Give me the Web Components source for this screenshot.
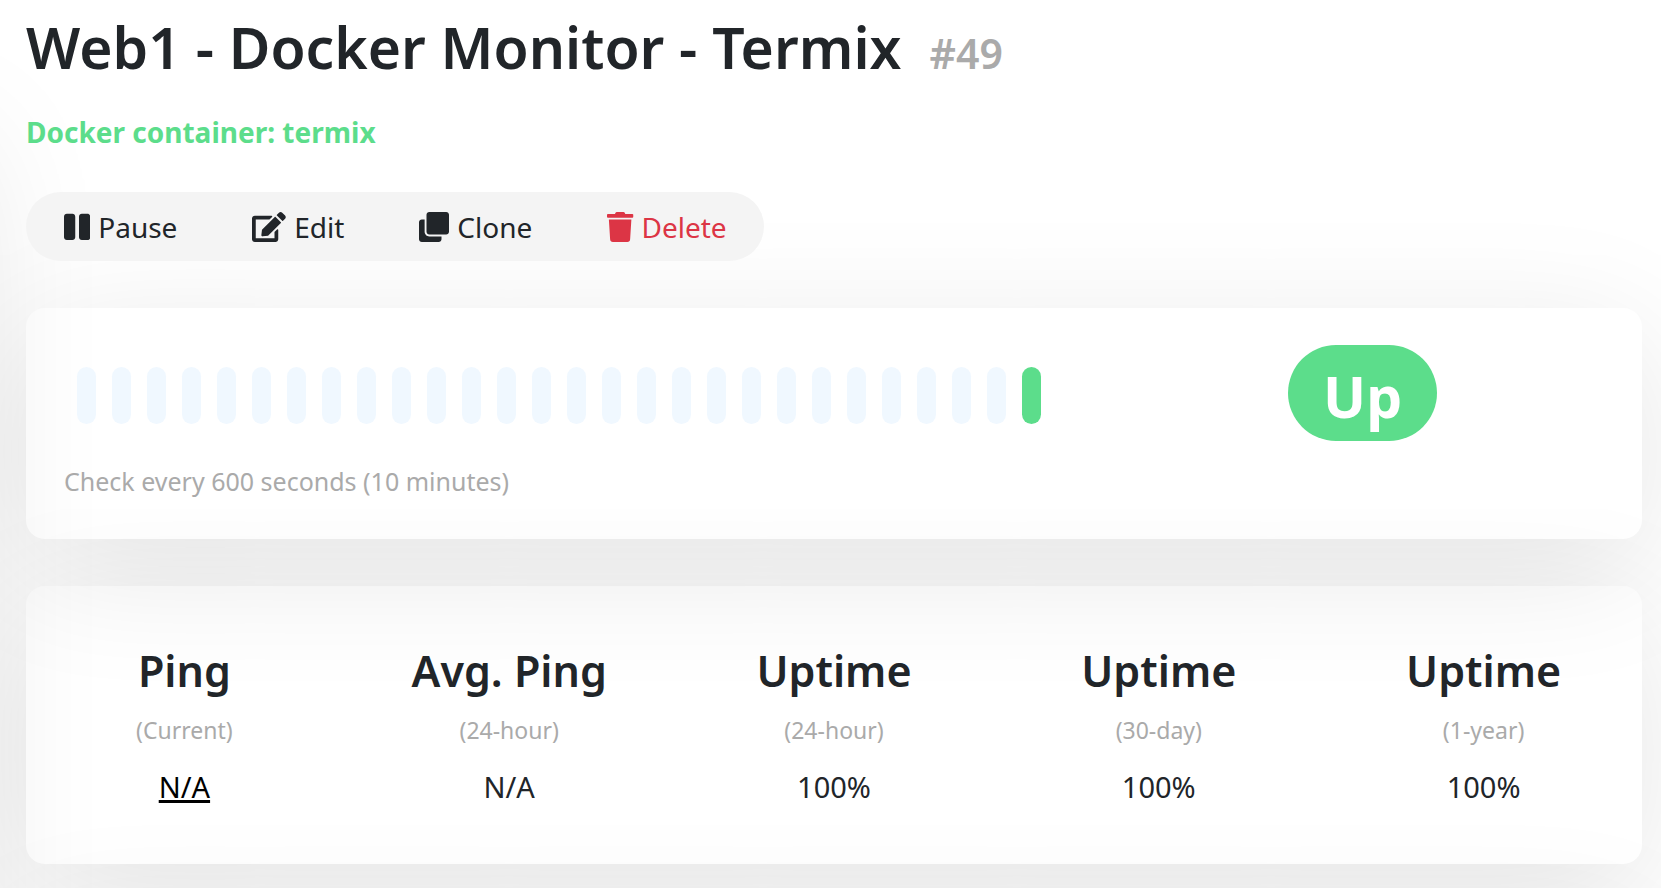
<!DOCTYPE html>
<html lang="en">
<head>
<meta charset="utf-8">
<title>Web1 - Docker Monitor - Termix</title>
<style>
	body {
		margin: 0;
		background: #fff;
		color: #212529;
		font: 400 28px/38px "Noto Sans", "Open Sans", sans-serif;
		}
	</style>
</head>
<body>

<app-shell>
	<shadow-card slot="side"></shadow-card>

	<monitor-heading number="49">
		Web1 - Docker Monitor - Termix
		<span slot="description">Docker container: termix</span>
	</monitor-heading>

	<action-group>
		<action-button icon="pause">Pause</action-button>
		<action-button icon="edit">Edit</action-button>
		<action-button icon="clone">Clone</action-button>
		<action-button icon="trash" class="danger">Delete</action-button>
	</action-group>

	<shadow-card>
		<monitor-status>
			<heartbeat-bar slot="beats" empty="27" up="1"></heartbeat-bar>
			<span slot="interval">Check every 600 seconds (10 minutes)</span>
			<status-badge slot="status">Up</status-badge>
		</monitor-status>
	</shadow-card>

	<shadow-card>
		<stat-row>
			<stat-item label="Ping" period="(Current)" href="#ping">N/A</stat-item>
			<stat-item label="Avg. Ping" period="(24-hour)">N/A</stat-item>
			<stat-item label="Uptime" period="(24-hour)">100%</stat-item>
			<stat-item label="Uptime" period="(30-day)">100%</stat-item>
			<stat-item label="Uptime" period="(1-year)">100%</stat-item>
		</stat-row>
	</shadow-card>

	<shadow-card class="chart"></shadow-card>
</app-shell>

<script type="module">

const ICONS = {
	pause: [ 448, "M144 479H48c-26.5 0-48-21.5-48-48V79c0-26.5 21.5-48 48-48h96c26.5 0 48 21.5 48 48v352c0 26.5-21.5 48-48 48zm304-48V79c0-26.5-21.5-48-48-48h-96c-26.5 0-48 21.5-48 48v352c0 26.5 21.5 48 48 48h96c26.5 0 48-21.5 48-48z" ],
	edit: [ 576, "M402.6 83.2l90.2 90.2c3.8 3.8 3.8 10 0 13.8L274.4 405.6l-92.8 10.3c-12.4 1.4-22.9-9.1-21.5-21.5l10.3-92.8L388.8 83.2c3.8-3.8 10-3.8 13.8 0zm162-22.9l-48.8-48.8c-15.2-15.2-39.9-15.2-55.2 0l-35.4 35.4c-3.8 3.8-3.8 10 0 13.8l90.2 90.2c3.8 3.8 10 3.8 13.8 0l35.4-35.4c15.2-15.3 15.2-40 0-55.2zM384 346.2V448H64V128h229.8c3.2 0 6.2-1.3 8.5-3.5l40-40c7.6-7.6 2.1-20.5-8.5-20.5H48C21.5 64 0 85.5 0 112v352c0 26.5 21.5 48 48 48h352c26.5 0 48-21.5 48-48V306.2c0-10.7-12.9-16-20.5-8.5l-40 40c-2.2 2.3-3.5 5.3-3.5 8.5z" ],
	clone: [ 512, "M464 0c26.51 0 48 21.49 48 48v288c0 26.51-21.49 48-48 48H176c-26.51 0-48-21.49-48-48V48c0-26.51 21.49-48 48-48h288M176 416c-44.112 0-80-35.888-80-80V128H48c-26.51 0-48 21.49-48 48v288c0 26.51 21.49 48 48 48h288c26.51 0 48-21.49 48-48v-48H176z" ],
	trash: [ 448, "M432 32H312l-9.4-18.7A24 24 0 0 0 281.1 0H166.8a23.72 23.72 0 0 0-21.4 13.3L136 32H16A16 16 0 0 0 0 48v32a16 16 0 0 0 16 16h416a16 16 0 0 0 16-16V48a16 16 0 0 0-16-16zM53.2 467a48 48 0 0 0 47.9 45h245.8a48 48 0 0 0 47.9-45L416 128H32z" ],
	}


class AppShell extends HTMLElement {

	constructor() {
		super()

		let shadow = this.attachShadow({ mode: "open" })

		// the side panel is scrolled out to the left, only its shadow reaches in
		shadow.innerHTML = `<style>
				:host {
					display: flex;
					gap: 48px;
					height: 100vh;
					overflow: auto;
					scrollbar-width: none;
					}
				aside {
					display: flex;
					flex: none;
					width: 600px;
					height: 1400px;
					margin: 112px 0 0 -622px;
					}
				aside ::slotted(*) {
					flex: 1;
					}
				main {
					display: flex;
					flex-direction: column;
					flex: 1;
					min-width: 0;
					height: max-content;
					padding: 12px 19px 47px 0;
					}
				::slotted(action-group) {
					margin-top: 41px;
					}
				main ::slotted(shadow-card) {
					margin-top: 47px;
					}
				::slotted(.chart) {
					height: 400px;
					}
				</style>
			<aside><slot name="side"></slot></aside>
			<main><slot></slot></main>`
		}

	static {
		customElements.define( "app-shell", this )
		}
	}


class MonitorHeading extends HTMLElement {

	constructor() {
		super()

		let shadow = this.attachShadow({ mode: "open" })

		shadow.innerHTML = `<style>
				:host {
					display: block;
					}
				header {
					display: flex;
					align-items: baseline;
					gap: 28px;
					}
				h1 {
					margin: 0;
					font-size: 57px;
					font-weight: 600;
					line-height: 70px;
					}
				.number {
					color: #aaa;
					font-size: 41px;
					font-weight: 600;
					line-height: 50px;
					}
				p {
					margin: 31px 0 0;
					color: #5cdd8b;
					font-weight: 700;
					}
				</style>
			<header>
				<h1><slot></slot></h1>
				<span class="number">#${ this.getAttribute("number") }</span>
			</header>
			<p><slot name="description"></slot></p>`
		}

	static {
		customElements.define( "monitor-heading", this )
		}
	}


class ActionGroup extends HTMLElement {

	constructor() {
		super()

		let shadow = this.attachShadow({ mode: "open" })

		// positioned so that the card shadows stay behind it
		shadow.innerHTML = `<style>
				:host {
					display: flex;
					position: relative;
					align-self: flex-start;
					height: 69px;
					border-radius: 35px;
					background: #f4f4f4;
					}
				</style>
			<slot></slot>`
		}

	static {
		customElements.define( "action-group", this )
		}
	}


class ActionButton extends HTMLElement {

	constructor() {
		super()

		let shadow = this.attachShadow({ mode: "open", delegatesFocus: true })
		let [ width, path ] = ICONS[ this.getAttribute("icon") ]

		shadow.innerHTML = `<style>
				:host {
					display: flex;
					}
				:host(.danger) {
					color: #dc3545;
					}
				button {
					display: flex;
					align-items: center;
					gap: 8px;
					padding: 0 37px 0 38px;
					border: 0;
					background: none;
					color: inherit;
					font: inherit;
					cursor: pointer;
					}
				svg {
					display: block;
					height: 30px;
					fill: currentColor;
					}
				</style>
			<button type="button">
				<svg viewBox="0 0 ${ width } 512" aria-hidden="true"><path d="${ path }"/></svg>
				<span><slot></slot></span>
			</button>`
		}

	static {
		customElements.define( "action-button", this )
		}
	}


class ShadowCard extends HTMLElement {

	constructor() {
		super()

		let shadow = this.attachShadow({ mode: "open" })

		// no background, so neighbouring shadows tint the card
		shadow.innerHTML = `<style>
				:host {
					display: block;
					border-radius: 19px;
					box-shadow: 0 28px 133px rgba(0, 0, 0, .1);
					}
				</style>
			<slot></slot>`
		}

	static {
		customElements.define( "shadow-card", this )
		}
	}


class MonitorStatus extends HTMLElement {

	constructor() {
		super()

		let shadow = this.attachShadow({ mode: "open" })

		shadow.innerHTML = `<style>
				:host {
					display: grid;
					grid-template-columns: 2fr 1fr;
					padding: 37px 15px 39px;
					}
				.beats {
					padding: 0 23px;
					}
				.interval {
					margin-top: 38px;
					color: #aaa;
					font-size: 25px;
					}
				.status {
					text-align: center;
					}
				</style>
			<div class="beats">
				<slot name="beats"></slot>
				<div class="interval"><slot name="interval"></slot></div>
			</div>
			<div class="status"><slot name="status"></slot></div>`
		}

	static {
		customElements.define( "monitor-status", this )
		}
	}


class HeartbeatBar extends HTMLElement {

	constructor() {
		super()

		let shadow = this.attachShadow({ mode: "open" })

		shadow.innerHTML = `<style>
				:host {
					display: flex;
					gap: 16px;
					padding: 22px 13px 0;
					}
				.beat {
					width: 19px;
					height: 57px;
					border-radius: 10px;
					background: #f0f8ff;
					}
				.beat.up {
					background: #5cdd8b;
					}
				</style>`
			+ `<div class="beat"></div>`.repeat( this.getAttribute("empty") )
			+ `<div class="beat up"></div>`.repeat( this.getAttribute("up") )
		}

	static {
		customElements.define( "heartbeat-bar", this )
		}
	}


class StatusBadge extends HTMLElement {

	constructor() {
		super()

		let shadow = this.attachShadow({ mode: "open" })

		shadow.innerHTML = `<style>
				:host {
					display: inline-block;
					padding: 6px 35px 0;
					border-radius: 48px;
					background: #5cdd8b;
					color: #fff;
					font-size: 57px;
					font-weight: 700;
					line-height: 90px;
					}
				</style>
			<slot></slot>`
		}

	static {
		customElements.define( "status-badge", this )
		}
	}


class StatRow extends HTMLElement {

	constructor() {
		super()

		let shadow = this.attachShadow({ mode: "open" })

		shadow.innerHTML = `<style>
				:host {
					display: grid;
					grid-template-columns: repeat(5, 1fr);
					margin: 0 -4px;
					padding: 58px 0 52px;
					text-align: center;
					}
				</style>
			<slot></slot>`
		}

	static {
		customElements.define( "stat-row", this )
		}
	}


class StatItem extends HTMLElement {

	constructor() {
		super()

		let shadow = this.attachShadow({ mode: "open" })
		let href = this.getAttribute("href")

		shadow.innerHTML = `<style>
				:host {
					display: flex;
					flex-direction: column;
					gap: 14px;
					}
				h4, p {
					margin: 0;
					}
				h4 {
					font-size: 43px;
					font-weight: 600;
					line-height: 54px;
					}
				p {
					color: #aaa;
					font-size: 23px;
					line-height: 36px;
					}
				.value {
					font-size: 29px;
					line-height: 50px;
					}
				a {
					color: #000;
					text-decoration-thickness: 3px;
					}
				</style>
			<h4>${ this.getAttribute("label") }</h4>
			<p>${ this.getAttribute("period") }</p>
			<span class="value">${ href ? `<a href="${ href }"><slot></slot></a>` : `<slot></slot>` }</span>`
		}

	static {
		customElements.define( "stat-item", this )
		}
	}

</script>
</body>
</html>
